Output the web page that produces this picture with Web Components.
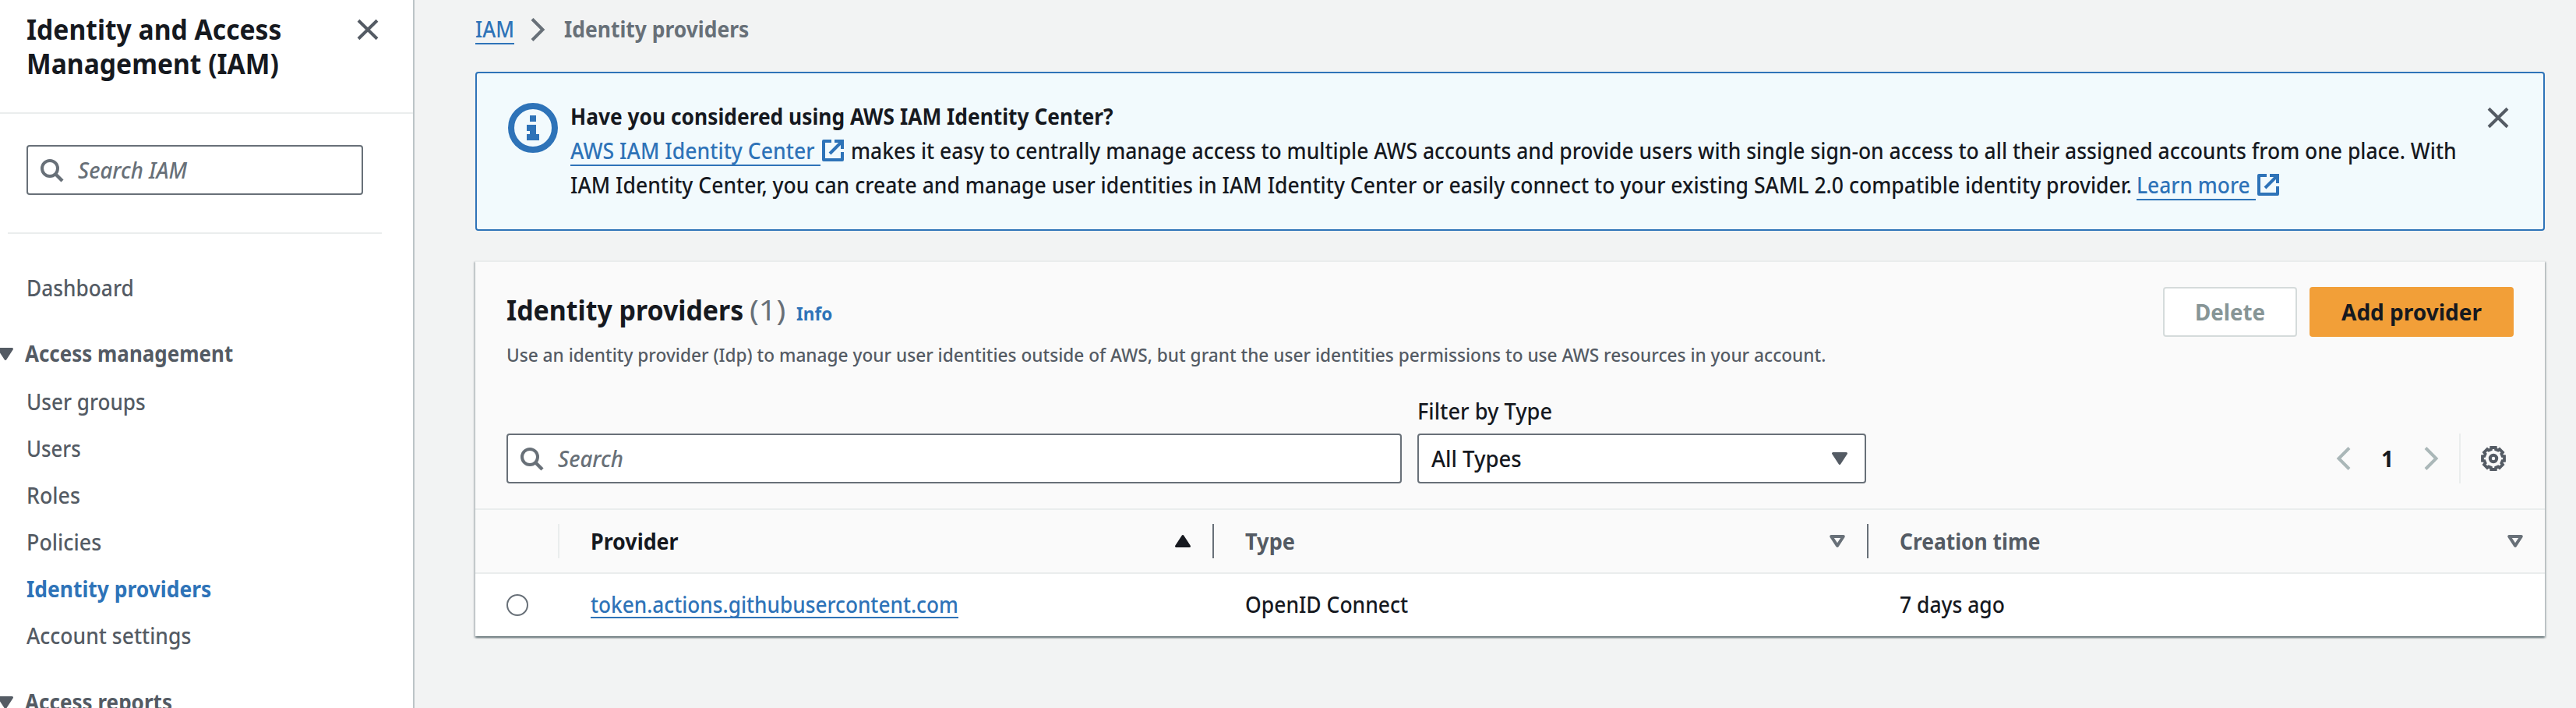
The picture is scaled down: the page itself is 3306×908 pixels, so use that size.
<!DOCTYPE html>
<html lang="en">
<head>
<meta charset="utf-8">
<title>IAM - Identity providers</title>
<style>
  html, body { margin: 0; padding: 0; }
  body {
    height: 908px; overflow: hidden; background: #f2f3f3;
    font-family: "Noto Sans", "Open Sans", sans-serif; font-size: 28px; font-weight: 500; line-height: 44px; color: #16191f;
  }
</style>
</head>
<body>
<iam-app></iam-app>
<script>
const define = (name, html, setup) => {
  const tpl = document.createElement('template');
  tpl.innerHTML = html;
  customElements.define(name, class extends HTMLElement {
    constructor() {
      super();
      this.attachShadow({ mode: 'open' }).appendChild(tpl.content.cloneNode(true));
    }
    connectedCallback() { if (setup) setup(this, this.shadowRoot); }
  });
};

const ICONS = {
  close: '<path d="M4 4.3 28 27.7M28 4.3 4 27.7" stroke="currentColor" stroke-width="4"/>',
  search: '<circle cx="14" cy="14" r="10" stroke="currentColor" stroke-width="4"/><path d="M20.5 20.5l9.5 9.5" stroke="currentColor" stroke-width="4.4"/>',
  next: '<path d="M9 2.5 22.5 16 9 29.5" stroke="currentColor" stroke-width="4"/>',
  prev: '<path d="M23 2.5 9.5 16 23 29.5" stroke="currentColor" stroke-width="4"/>',
  down: '<path d="M7.5 9.5h17L16 22.5z" fill="currentColor" stroke="currentColor" stroke-width="3" stroke-linejoin="round"/>',
  up: '<path d="M7.5 22.5h17L16 9.5z" fill="currentColor" stroke="currentColor" stroke-width="3" stroke-linejoin="round"/>',
  sort: '<path d="M8.2 10h15.6L16 21.8z" stroke="currentColor" stroke-width="4" stroke-linejoin="round"/>',
  external: '<path d="M14 4H4v24h24V18" stroke="currentColor" stroke-width="4" stroke-linejoin="round"/><path d="M18 4h10v10M27 5 12 20" stroke="currentColor" stroke-width="4"/>',
  info: '<circle cx="16" cy="16" r="14" stroke="currentColor" stroke-width="4"/><path d="M14 8h4v4h-4zM12 14h6v6h2v4h-8v-4h2v-2h-2z" fill="currentColor"/>',
  gear: (() => {
    const pts = [];
    for (let k = 0; k < 8; k++) {
      for (const [off, r] of [[-15, 12], [-11.5, 14.3], [11.5, 14.3], [15, 12]]) {
        const t = (k * 45 + off - 90) * Math.PI / 180;
        pts.push((16 + r * Math.cos(t)).toFixed(2) + ',' + (16 + r * Math.sin(t)).toFixed(2));
      }
    }
    return '<polygon points="' + pts.join(' ') + '" stroke="currentColor" stroke-width="3.8" stroke-linejoin="miter"/><circle cx="16" cy="16" r="4.2" stroke="currentColor" stroke-width="4"/>';
  })()
};

define('ui-icon', `<style>
  :host { display: block; flex: none; width: var(--size, 32px); height: var(--size, 32px); }
  svg { display: block; width: 100%; height: 100%; overflow: visible; }
</style><svg viewBox="0 0 32 32" fill="none"></svg>`,
  (el, root) => { root.querySelector('svg').innerHTML = ICONS[el.getAttribute('name')]; });

/* Single-line label condensed to a fixed advance width. */
define('fit-text', `<style>
  :host { display: block; flex: none; }
  span { display: inline-block; white-space: nowrap; transform-origin: 0 50%; vertical-align: top; }
</style><span><slot></slot></span>`,
  (el, root) => {
    const w = +el.getAttribute('w'), s = root.querySelector('span');
    el.style.width = w + 'px';
    s.style.transform = 'scaleX(' + (w / s.offsetWidth).toFixed(4) + ')';
  });

define('ui-link', `<style>
  :host { display: block; flex: none; color: #2e73b8; height: 37px; border-bottom: 2px solid #2e73b8; margin-bottom: 5px; }
</style><slot></slot>`);

define('ui-input', `<style>
  :host { display: flex; box-sizing: border-box; height: 64px; align-items: center; gap: 18px;
    border: 2px solid #687078; border-radius: 4px; background: #fff; padding: 0 14px; color: #687078; font-style: italic; }
</style><ui-icon name="search"></ui-icon><slot></slot>`);

define('ui-select', `<style>
  :host { display: flex; box-sizing: border-box; height: 64px; align-items: center; justify-content: space-between;
    border: 2px solid #687078; border-radius: 4px; background: #fff; padding: 0 16px; }
  ui-icon { color: #545b64; }
</style><slot></slot><ui-icon name="down"></ui-icon>`);

define('ui-button', `<style>
  :host { display: flex; box-sizing: border-box; height: 64px; align-items: center; justify-content: center;
    border: 2px solid #d5dbdb; border-radius: 4px; background: #fff; color: #879596; font-weight: 700; }
  :host([primary]) { background: #f29f38; border-color: #f29f38; color: #16191f; }
</style><slot></slot>`);

define('nav-item', `<style>
  :host { display: block; height: 44px; padding-left: 34px; color: #545b64; }
  :host([active]) { color: #2e73b8; font-weight: 700; }
</style><slot></slot>`);

define('nav-section', `<style>
  :host { display: flex; align-items: center; height: 44px; color: #545b64; font-weight: 700; gap: 9px; margin-left: -9px; }
  ui-icon { position: relative; top: 1px; }
</style><ui-icon name="down"></ui-icon><slot></slot>`);

define('side-nav', `<style>
  :host { display: block; box-sizing: border-box; width: 532px; flex: none; height: 908px; overflow: hidden; background: #fff;
    border-right: 2px solid #bcc4c7; }
  header { box-sizing: border-box; display: flex; justify-content: space-between; height: 146px; border-bottom: 2px solid #eaeded;
    padding: 15px 42px 0 34px; font-size: 36px; font-weight: 700; }
  header ui-icon { color: #545b64; margin-top: 7px; }
  header div { margin-top: 1px; }
  .search { padding: 40px 64px 48px 34px; }
  hr { border: 0; height: 2px; background: #eaeded; margin: 0 40px 0 10px; }
  nav { padding-top: 47px; }
  .items { display: grid; gap: 16px; margin: 18px 0 41px; }
  nav-section.first { margin-top: 40px; }
</style>
<header><div><fit-text w="327">Identity and Access</fit-text><fit-text w="324">Management (IAM)</fit-text></div><ui-icon name="close"></ui-icon></header>
<div class="search"><ui-input><fit-text w="140">Search IAM</fit-text></ui-input></div>
<hr>
<nav>
  <nav-item><fit-text w="138">Dashboard</fit-text></nav-item>
  <nav-section class="first"><fit-text w="267">Access management</fit-text></nav-section>
  <div class="items">
    <nav-item><fit-text w="153">User groups</fit-text></nav-item>
    <nav-item><fit-text w="70">Users</fit-text></nav-item>
    <nav-item><fit-text w="69">Roles</fit-text></nav-item>
    <nav-item><fit-text w="96">Policies</fit-text></nav-item>
    <nav-item active><fit-text w="237">Identity providers</fit-text></nav-item>
    <nav-item><fit-text w="211">Account settings</fit-text></nav-item>
  </div>
  <nav-section><fit-text w="189">Access reports</fit-text></nav-section>
</nav>`);

define('bread-crumbs', `<style>
  :host { display: flex; height: 92px; box-sizing: border-box; padding-top: 19px; align-items: flex-start; }
  ui-icon { margin: 3px 18px 0 14px; color: #687078; }
  b { color: #687078; font-weight: 700; }
  ui-link, b { line-height: 37px; }
  ui-link { height: 36px; }
</style><ui-link><fit-text w="50">IAM</fit-text></ui-link><ui-icon name="next"></ui-icon><b><fit-text w="237">Identity providers</fit-text></b>`);

define('info-banner', `<style>
  :host { display: flex; box-sizing: border-box; height: 204px; border: 2px solid #2e73b8; border-radius: 4px; background: #f2fafd;
    padding: 33px 42px 0 40px; }
  .badge { --size: 64px; color: #2e73b8; margin: 5px 16px 0 0; }
  .text { flex: 1; }
  .line { display: flex; height: 44px; }
  b { font-weight: 700; }
  .ext { color: #2e73b8; margin: 6px 7px 0 0; }
  .close { color: #545b64; margin-top: 8px; }
  ui-link { padding-right: 7px; height: 40px; margin-bottom: 2px; }
</style>
<ui-icon class="badge" name="info"></ui-icon>
<div class="text">
  <div class="line"><b><fit-text w="697">Have you considered using AWS IAM Identity Center?</fit-text></b></div>
  <div class="line"><ui-link><fit-text w="314">AWS IAM Identity Center</fit-text></ui-link><ui-icon class="ext" name="external"></ui-icon><fit-text w="2061">makes it easy to centrally manage access to multiple AWS accounts and provide users with single sign-on access to all their assigned accounts from one place. With</fit-text></div>
  <div class="line"><fit-text w="2004" style="margin-right:6px">IAM Identity Center, you can create and manage user identities in IAM Identity Center or easily connect to your existing SAML 2.0 compatible identity provider.</fit-text><ui-link><fit-text w="146">Learn more</fit-text></ui-link><ui-icon class="ext" name="external"></ui-icon></div>
</div>
<ui-icon class="close" name="close"></ui-icon>`);

define('page-nav', `<style>
  :host { display: flex; align-items: center; height: 64px; color: #aab7b8; padding-right: 10px; }
  b { color: #16191f; width: 16px; margin: 0 32px; font-weight: 700; }
  i { width: 2px; height: 64px; background: #eaeded; margin: 0 26px 0 20px; }
  .gear { color: #545b64; }
</style><ui-icon name="prev"></ui-icon><b><fit-text w="16">1</fit-text></b><ui-icon name="next"></ui-icon><i></i><ui-icon class="gear" name="gear"></ui-icon>`);

define('provider-table', `<style>
  :host { display: block; }
  .row { display: grid; grid-template-columns: 108px 840px 840px 868px; box-sizing: border-box; }
  .head { height: 84px; border-top: 2px solid #eaeded; border-bottom: 2px solid #eaeded; background: #fafafa; font-weight: 700; color: #545b64; }
  .head > div { box-sizing: border-box; height: 44px; margin: 18px 0; display: flex; justify-content: space-between; align-items: center;
    border-right: 2px solid #687078; padding: 0 22px 0 40px; }
  .head > div:first-child { border-color: #eaeded; }
  .head > div:last-child { border: 0; }
  .sorted { color: #16191f; }
  .sortable ui-icon { color: #687078; }
  .body { height: 80px; background: #fff; }
  .body > div { padding: 17px 0 0 40px; }
  .radio { box-sizing: border-box; width: 28px; height: 28px; border: 2px solid #687078; border-radius: 50%; margin-top: 9px; }
  .wrap { display: flex; }
  ui-link { height: 38px; }
</style>
<div class="row head">
  <div></div>
  <div class="sorted"><fit-text w="113">Provider</fit-text><ui-icon name="up"></ui-icon></div>
  <div class="sortable"><fit-text w="64">Type</fit-text><ui-icon name="sort"></ui-icon></div>
  <div class="sortable"><fit-text w="180">Creation time</fit-text><ui-icon name="sort"></ui-icon></div>
</div>
<div class="row body">
  <div><div class="radio"></div></div>
  <div class="wrap"><ui-link><fit-text w="472">token.actions.githubusercontent.com</fit-text></ui-link></div>
  <div><fit-text w="209">OpenID Connect</fit-text></div>
  <div><fit-text w="135">7 days ago</fit-text></div>
</div>`);

define('providers-panel', `<style>
  :host { display: block; margin-top: 38px; border-top: 2px solid #eaeded; background: #fafafa; height: 480px;
    box-shadow: 0 2px 2px 0 rgba(0,28,36,.45), 2px 2px 2px 0 rgba(0,28,36,.15), -2px 2px 2px 0 rgba(0,28,36,.15); }
  .top { display: flex; justify-content: space-between; padding: 32px 40px 0 40px; height: 112px; box-sizing: border-box; }
  .title { display: flex; align-items: baseline; font-size: 36px; font-weight: 700; margin-top: 8px; height: 44px; }
  .count { color: #687078; font-weight: 400; margin-left: 8px; }
  .info { color: #2e73b8; font-size: 24px; margin-left: 14px; }
  .desc { font-size: 24px; color: #545b64; margin-top: 17px; height: 36px; line-height: 36px; }
  .actions { display: flex; gap: 16px; }
  .tools { display: flex; align-items: flex-end; padding: 0 40px; height: 172px; gap: 20px; box-sizing: border-box; margin: 0 0 32px; }
  ui-input { width: 1149px; }
  .filter { width: 576px; }
  .filter > fit-text { margin-bottom: 7px; }
  page-nav { margin-left: auto; }
</style>
<div class="top">
  <div>
    <div class="title"><fit-text w="304">Identity providers</fit-text><fit-text class="count" w="46">(1)</fit-text><fit-text class="info" w="46">Info</fit-text></div>
    <div class="desc"><fit-text w="1693">Use an identity provider (Idp) to manage your user identities outside of AWS, but grant the user identities permissions to use AWS resources in your account.</fit-text></div>
  </div>
  <div class="actions"><ui-button style="width:172px"><fit-text w="90">Delete</fit-text></ui-button><ui-button primary style="width:262px"><fit-text w="180">Add provider</fit-text></ui-button></div>
</div>
<div class="tools">
  <ui-input><fit-text w="84">Search</fit-text></ui-input>
  <div class="filter"><fit-text w="173">Filter by Type</fit-text><ui-select><fit-text w="116">All Types</fit-text></ui-select></div>
  <page-nav></page-nav>
</div>
<provider-table></provider-table>`);

define('iam-app', `<style>
  :host { display: flex; width: 3306px; height: 908px; overflow: hidden; }
  main { flex: 1; padding: 0 40px 0 78px; }
</style><side-nav></side-nav><main><bread-crumbs></bread-crumbs><info-banner></info-banner><providers-panel></providers-panel></main>`);
</script>
</body>
</html>
